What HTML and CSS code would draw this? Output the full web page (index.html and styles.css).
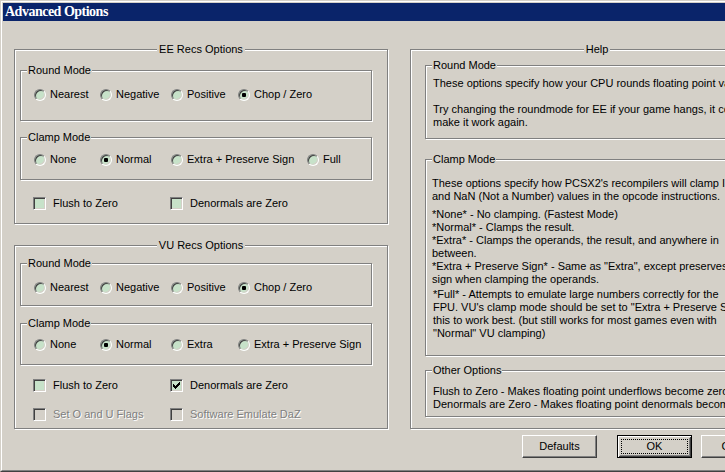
FILE: index.html
```html
<!DOCTYPE html>
<html>
<head>
<meta charset="utf-8">
<title>Advanced Options</title>
<link rel="stylesheet" href="styles.css">
</head>
<body>
<div class="window">
  <div class="frame">
    <div class="titlebar">Advanced Options</div>
    <div class="content">
      <div class="col-left">
        <fieldset class="group major ee">
          <legend>EE Recs Options</legend>
          <fieldset class="group sub round-ee">
            <legend>Round Mode</legend>
            <div class="radios cols-4">
              <span class="opt"><span class="radio"></span>Nearest</span>
              <span class="opt"><span class="radio"></span>Negative</span>
              <span class="opt"><span class="radio"></span>Positive</span>
              <span class="opt"><span class="radio on"></span>Chop / Zero</span>
            </div>
          </fieldset>
          <fieldset class="group sub clamp-ee">
            <legend>Clamp Mode</legend>
            <div class="radios cols-ee-clamp">
              <span class="opt"><span class="radio"></span>None</span>
              <span class="opt"><span class="radio on"></span>Normal</span>
              <span class="opt"><span class="radio"></span>Extra + Preserve Sign</span>
              <span class="opt"><span class="radio"></span>Full</span>
            </div>
          </fieldset>
          <div class="checks checks-ee">
            <span class="chk-opt"><span class="chk"></span>Flush to Zero</span>
            <span class="chk-opt"><span class="chk"></span>Denormals are Zero</span>
          </div>
        </fieldset>

        <fieldset class="group major vu">
          <legend>VU Recs Options</legend>
          <fieldset class="group sub round-vu">
            <legend>Round Mode</legend>
            <div class="radios cols-4">
              <span class="opt"><span class="radio"></span>Nearest</span>
              <span class="opt"><span class="radio"></span>Negative</span>
              <span class="opt"><span class="radio"></span>Positive</span>
              <span class="opt"><span class="radio on"></span>Chop / Zero</span>
            </div>
          </fieldset>
          <fieldset class="group sub clamp-vu">
            <legend>Clamp Mode</legend>
            <div class="radios cols-4">
              <span class="opt"><span class="radio"></span>None</span>
              <span class="opt"><span class="radio on"></span>Normal</span>
              <span class="opt"><span class="radio"></span>Extra</span>
              <span class="opt"><span class="radio"></span>Extra + Preserve Sign</span>
            </div>
          </fieldset>
          <div class="checks checks-vu1">
            <span class="chk-opt"><span class="chk"></span>Flush to Zero</span>
            <span class="chk-opt"><span class="chk"><svg class="tick" width="11" height="11" viewBox="0 0 11 11"><path d="M2 4H3V5H4V6H5V5H6V4H7V3H8V2H9V5H8V6H7V7H6V8H5V9H4V8H3V7H2Z" fill="#000" shape-rendering="crispEdges"/></svg></span>Denormals are Zero</span>
          </div>
          <div class="checks checks-vu2">
            <span class="chk-opt disabled"><span class="chk"></span>Set O and U Flags</span>
            <span class="chk-opt disabled"><span class="chk"></span>Software Emulate DaZ</span>
          </div>
        </fieldset>
      </div>

      <fieldset class="group major help">
        <legend>Help</legend>
        <fieldset class="group sub help-round">
          <legend>Round Mode</legend>
          <div class="help-text">These options specify how your CPU rounds floating point values.<br><br>Try changing the roundmode for EE if your game hangs, it could<br>make it work again.</div>
        </fieldset>
        <fieldset class="group sub help-clamp">
          <legend>Clamp Mode</legend>
          <div class="help-text p1">These options specify how PCSX2's recompilers will clamp Infinities<br>and NaN (Not a Number) values in the opcode instructions.</div>
          <div class="help-text p2">*None* - No clamping. (Fastest Mode)<br>*Normal* - Clamps the result.<br>*Extra* - Clamps the operands, the result, and anywhere in<br>between.<br>*Extra + Preserve Sign* - Same as "Extra", except preserves<br>sign when clamping the operands.</div>
          <div class="help-text p3">*Full* - Attempts to emulate large numbers correctly for the<br>FPU. VU's clamp mode should be set to "Extra + Preserve Sign" for<br>this to work best. (but still works for most games even with<br>"Normal" VU clamping)</div>
        </fieldset>
        <fieldset class="group sub help-other">
          <legend>Other Options</legend>
          <div class="help-text">Flush to Zero - Makes floating point underflows become zero.<br>Denormals are Zero - Makes floating point denormals become zero.</div>
        </fieldset>
      </fieldset>

      <div class="buttons">
        <button class="btn" type="button">Defaults</button>
        <button class="btn default" type="button"><span class="focus">OK</span></button>
        <button class="btn cancel" type="button">Cancel</button>
      </div>
    </div>
  </div>
</div>
</body>
</html>
```

FILE: styles.css
```css
html, body {
  margin: 0;
  padding: 0;
}
body {
  background: #d4d0c8;
  overflow: hidden;
  font-family: "Liberation Sans", Arial, sans-serif;
  font-size: 11px;
  line-height: 13px;
  color: #000;
}
.window {
  width: 840px;
  height: 472px;
  box-sizing: border-box;
  border-top: 1px solid #d4d0c8;
  border-left: 1px solid #d4d0c8;
  border-bottom: 1px solid #404040;
  display: flex;
}
.frame {
  flex: 1;
  display: flex;
  flex-direction: column;
  border-top: 1px solid #fff;
  border-left: 1px solid #fff;
  border-bottom: 1px solid #808080;
  padding: 1px 0 1px 1px;
}
.titlebar {
  flex: none;
  height: 18px;
  background: #0a246a;
  color: #fff;
  font: bold 14px/18px "Liberation Serif", "Times New Roman", serif;
  letter-spacing: -0.5px;
  padding-left: 2px;
}
.content {
  display: grid;
  grid-template-columns: 374px 374px;
  column-gap: 22px;
  align-content: start;
  padding: 22px 0 0 11px;
}

/* group boxes */
.group {
  margin: 0;
  padding: 0;
  min-width: 0;
  min-inline-size: 0;
  border: 1px solid #808080;
  box-shadow: inset 1px 1px #fff, 1px 1px #fff;
}
.group > legend {
  padding: 0 1px;
  margin-left: 6px;
  background: #d4d0c8;
  line-height: 13px;
}
.group.major > legend {
  margin: 0 auto;
  padding: 0 2px;
}
.ee { padding: 8px 0 13px; }
.vu { margin-top: 15px; padding: 5px 0 7px; }
.col-left .sub { margin-left: 5px; margin-right: 15px; }

.round-ee { padding: 11px 0 19px; }
.clamp-ee { margin-top: 10px; padding: 9px 0 13px; }
.round-vu { padding: 11px 0 11px; }
.clamp-vu { margin-top: 11px; padding: 8px 0 13px; }

/* radios */
.radios {
  display: grid;
  height: 13px;
  align-items: center;
  padding-left: 13px;
}
.cols-4 { grid-template-columns: 66px 71px 67px auto; }
.cols-ee-clamp { grid-template-columns: 66px 71px 136px auto; }
.opt {
  display: flex;
  align-items: center;
  gap: 4px;
  white-space: nowrap;
}
.radio {
  flex: none;
  width: 12px;
  height: 12px;
  box-sizing: border-box;
  border-radius: 50%;
  border: 1px solid;
  border-color: #808080 #fff #fff #808080;
  box-shadow: inset 1px 1px #404040, inset -1px -1px #d4d0c8;
  background: #c7e2c9;
  display: flex;
  align-items: center;
  justify-content: center;
}
.radio.on::after {
  content: "";
  width: 4px;
  height: 4px;
  border-radius: 1px;
  background: #000;
}

/* checkboxes */
.checks {
  display: grid;
  grid-template-columns: 137px auto;
  height: 13px;
  padding-left: 18px;
}
.checks-ee { margin-top: 17px; }
.checks-vu1 { margin-top: 14px; }
.checks-vu2 { margin-top: 16px; }
.chk-opt {
  display: flex;
  align-items: center;
  gap: 7px;
  white-space: nowrap;
}
.chk {
  flex: none;
  width: 13px;
  height: 13px;
  box-sizing: border-box;
  border: 1px solid;
  border-color: #808080 #fff #fff #808080;
  box-shadow: inset 1px 1px #404040, inset -1px -1px #d4d0c8;
  background: #c7e2c9;
}
.tick { display: block; }
.disabled { color: #808080; text-shadow: 1px 1px #fff; }
.disabled .chk { background: #d4d0c8; }

/* help */
.help { padding: 3px 0 0; }
.help .sub { margin-left: 14px; margin-right: 14px; }
.help-text { white-space: nowrap; padding-left: 7px; }
.help-round { padding: 5px 0 9px; }
.help-clamp { margin-top: 14px; padding: 11px 0 15px; }
.help-clamp .p1, .help-clamp .p2 { padding-left: 6px; }
.help-clamp .p2 { margin-top: 5px; }
.help-clamp .p3 { margin-top: 2px; }
.help-other { margin-top: 8px; padding: 8px 0 5px; }

/* buttons */
.buttons {
  grid-column: 2;
  display: flex;
  margin-top: 6px;
  padding-left: 112px;
}
.btn {
  appearance: none;
  width: 75px;
  height: 23px;
  box-sizing: border-box;
  margin: 0;
  padding: 0;
  font: inherit;
  color: #000;
  background: #d4d0c8;
  border: 1px solid;
  border-color: #fff #404040 #404040 #fff;
  box-shadow: inset -1px -1px #808080, inset 1px 1px #d4d0c8;
  display: flex;
  align-items: center;
  justify-content: center;
}
.btn.default {
  margin-left: 20px;
  border: 1px solid #000;
  box-shadow: inset 1px 1px #fff, inset -1px -1px #404040, inset 2px 2px #d4d0c8, inset -2px -2px #808080;
  padding: 3px;
  align-items: stretch;
}
.focus {
  flex: 1;
  border: 1px dotted #000;
  display: flex;
  align-items: center;
  justify-content: center;
}
.btn.cancel { margin-left: 9px; }
```
